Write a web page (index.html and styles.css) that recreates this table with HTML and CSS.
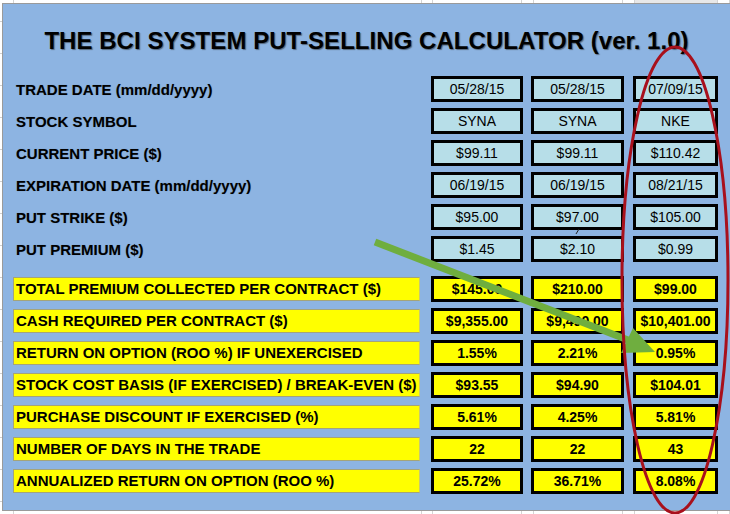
FILE: index.html
```html
<!DOCTYPE html>
<html>
<head>
<meta charset="utf-8">
<title>BCI Put-Selling Calculator</title>
<link rel="stylesheet" href="styles.css">
</head>
<body>
<div class="sheet">
  <div class="strip strip-top">
    <span></span><span></span><span></span><span></span><span></span><span></span><span></span><span class="sel"></span><span></span>
  </div>
  <div class="mid">
    <div class="rowhdr"></div>
    <div class="panel">
      <h1 class="title">THE BCI SYSTEM PUT-SELLING CALCULATOR (ver. 1.0)</h1>
      <div class="grid">
        <div class="lbl">TRADE DATE (mm/dd/yyyy)</div>
        <div class="in">05/28/15</div><div class="in">05/28/15</div><div class="in">07/09/15</div>

        <div class="lbl">STOCK SYMBOL</div>
        <div class="in">SYNA</div><div class="in">SYNA</div><div class="in">NKE</div>

        <div class="lbl">CURRENT PRICE ($)</div>
        <div class="in">$99.11</div><div class="in">$99.11</div><div class="in">$110.42</div>

        <div class="lbl">EXPIRATION DATE (mm/dd/yyyy)</div>
        <div class="in">06/19/15</div><div class="in">06/19/15</div><div class="in">08/21/15</div>

        <div class="lbl">PUT STRIKE ($)</div>
        <div class="in">$95.00</div><div class="in">$97.00</div><div class="in">$105.00</div>

        <div class="lbl">PUT PREMIUM ($)</div>
        <div class="in">$1.45</div><div class="in">$2.10</div><div class="in">$0.99</div>
      </div>
      <div class="grid out-grid">
        <div class="ylbl">TOTAL PREMIUM COLLECTED PER CONTRACT ($)</div>
        <div class="out">$145.00</div><div class="out">$210.00</div><div class="out">$99.00</div>

        <div class="ylbl">CASH REQUIRED PER CONTRACT ($)</div>
        <div class="out">$9,355.00</div><div class="out">$9,490.00</div><div class="out">$10,401.00</div>

        <div class="ylbl">RETURN ON OPTION (ROO %) IF UNEXERCISED</div>
        <div class="out">1.55%</div><div class="out">2.21%</div><div class="out">0.95%</div>

        <div class="ylbl">STOCK COST BASIS (IF EXERCISED) / BREAK-EVEN ($)</div>
        <div class="out">$93.55</div><div class="out">$94.90</div><div class="out">$104.01</div>

        <div class="ylbl">PURCHASE DISCOUNT IF EXERCISED (%)</div>
        <div class="out">5.61%</div><div class="out">4.25%</div><div class="out">5.81%</div>

        <div class="ylbl">NUMBER OF DAYS IN THE TRADE</div>
        <div class="out">22</div><div class="out">22</div><div class="out">43</div>

        <div class="ylbl">ANNUALIZED RETURN ON OPTION (ROO %)</div>
        <div class="out">25.72%</div><div class="out">36.71%</div><div class="out">8.08%</div>
      </div>
    </div>
  </div>
  <div class="strip strip-bottom">
    <span></span><span></span><span></span><span></span><span></span><span></span><span></span><span></span><span></span>
  </div>
</div>
<svg class="overlay" width="730" height="514" viewBox="0 0 730 514">
  <line x1="579" y1="229" x2="576" y2="234" stroke="#222" stroke-width="1"/>
  <line x1="375" y1="242" x2="628" y2="340" stroke="#6fae3f" stroke-width="7"/>
  <polygon points="655,352 621,353 633,328" fill="#6fae3f"/>
  <ellipse cx="675" cy="280" rx="53" ry="233" fill="none" stroke="#a8101c" stroke-width="3"/>
</svg>
</body>
</html>
```

FILE: styles.css
```css
html, body {
  margin: 0;
  padding: 0;
  background: #ffffff;
}
body {
  width: 730px;
  height: 514px;
  overflow: hidden;
  position: relative;
  font-family: "Liberation Sans", Arial, sans-serif;
  color: #000;
}
.sheet {
  display: flex;
  flex-direction: column;
  width: 730px;
  height: 514px;
}
.strip {
  display: grid;
  grid-template-columns: 14px 408px 11px 89px 12px 89px 12px 83px 1fr;
  height: 3px;
  flex: none;
}
.strip span {
  border-right: 1px solid #d4d4d4;
}
.strip .sel {
  background: #e8e8e8;
}
.strip-bottom {
  height: 3px;
}
.mid {
  display: flex;
  height: 508px;
  flex: none;
}
.rowhdr {
  width: 2px;
  flex: none;
  background: repeating-linear-gradient(to bottom, #fff 0, #fff 18px, #cfcfcf 18px, #cfcfcf 19px, #fff 19px, #fff 32px);
}
.panel {
  flex: 1;
  box-sizing: border-box;
  background: #8db4e2;
  border-top: 1px solid #9a9a9a;
  border-left: 1px solid #9a9a9a;
  border-bottom: 1px solid #9a9a9a;
  padding: 23px 0 0 10px;
}
.title {
  margin: 0 0 21px -10px;
  font-size: 24px;
  line-height: 28px;
  font-weight: bold;
  text-align: center;
  letter-spacing: 0.05px;
  text-shadow: 1px 1px 1px rgba(40, 40, 40, 0.55);
}
.grid {
  display: grid;
  grid-template-columns: 418px 100px 102px 85px;
  grid-auto-rows: 26px;
  row-gap: 6px;
}
.out-grid {
  margin-top: 14px;
}
.lbl {
  font-size: 15px;
  font-weight: bold;
  align-self: center;
  padding-left: 3px;
  text-shadow: 0 0 1px rgba(0, 0, 0, 0.25);
}
.in, .out {
  box-sizing: border-box;
  border: 3px solid #000;
  height: 26px;
  display: flex;
  align-items: center;
  justify-content: center;
  font-size: 14px;
}
.grid > :nth-child(4n+2) { width: 92px; }
.grid > :nth-child(4n+3) { width: 93px; }
.grid > :nth-child(4n+4) { width: 85px; }
.in {
  background: #b7dee8;
}
.out {
  background: #ffff00;
  font-weight: bold;
}
.ylbl {
  box-sizing: border-box;
  width: 407px;
  height: 24px;
  align-self: center;
  background: #ffff00;
  border: 1px solid #a4a47a;
  border-right-color: #c8c870;
  padding-left: 2px;
  font-size: 15px;
  font-weight: bold;
  line-height: 22px;
  white-space: nowrap;
}
.overlay {
  position: absolute;
  left: 0;
  top: 0;
  pointer-events: none;
}
```
